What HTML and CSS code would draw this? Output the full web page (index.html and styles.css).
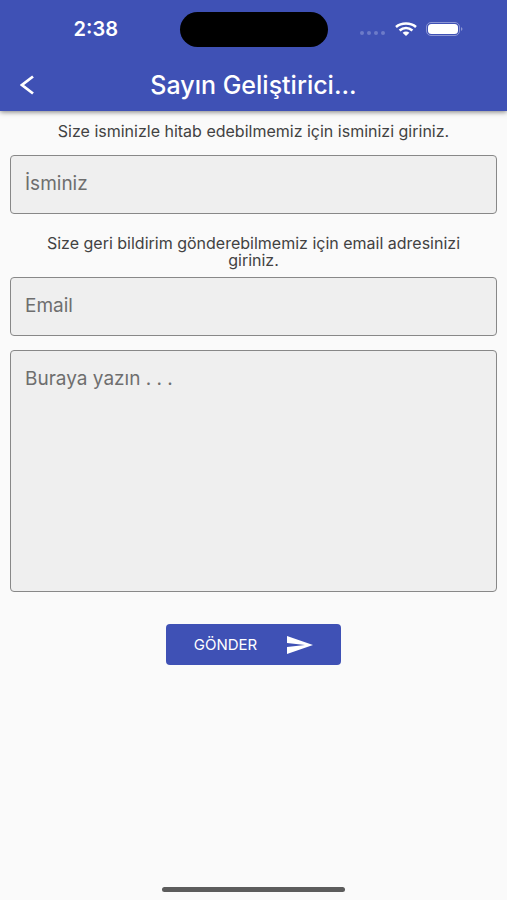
FILE: index.html
```html
<!DOCTYPE html>
<html lang="tr">
<head>
    <meta charset="UTF-8">
    <meta name="viewport" content="width=device-width, initial-scale=1.0">
    <title>Sayın Geliştirici...</title>
    <link rel="stylesheet" href="styles.css">
</head>
<body>
    <header class="app-bar">
        <div class="status-bar">
            <span class="clock">2:38</span>
            <div class="island"></div>
            <div class="status-icons">
                <svg class="signal" width="26" height="4" viewBox="0 0 26 4" aria-hidden="true">
                    <circle cx="2" cy="2" r="2"/>
                    <circle cx="9" cy="2" r="2"/>
                    <circle cx="16" cy="2" r="2"/>
                    <circle cx="23" cy="2" r="2"/>
                </svg>
                <svg width="22" height="14" viewBox="0 0 22 14" fill="none" stroke="#fff" stroke-width="2.6" aria-hidden="true">
                    <path d="M1 5C6.500 0.400 15.500 0.400 21 5"/>
                    <path d="M4.600 8.500C8.400 5.300 13.600 5.300 17.400 8.500"/>
                    <path d="M7.600 10.800C9.600 9.200 12.400 9.200 14.400 10.800L11 14Z" fill="#fff" stroke="none"/>
                </svg>
                <svg width="37" height="14" viewBox="0 0 37 14" aria-hidden="true">
                    <rect x="0.500" y="0.500" width="33" height="13" rx="4.500" fill="none" stroke="#8c96d3"/>
                    <rect x="2" y="2" width="30" height="10" rx="3.500" fill="#fff"/>
                    <path d="M35 5C37 6 37 8 35 9Z" fill="#8c96d3"/>
                </svg>
            </div>
        </div>
        <div class="toolbar">
            <button type="button" class="back" aria-label="Geri">
                <svg width="14" height="20" viewBox="0 0 14 20" fill="none" stroke="#fff" stroke-width="2.800" aria-hidden="true">
                    <path d="M13 1.500L2 10L13 18.500"/>
                </svg>
            </button>
            <h1>Sayın Geliştirici...</h1>
        </div>
    </header>

    <form class="feedback">
        <label for="name">Size isminizle hitab edebilmemiz için isminizi giriniz.</label>
        <input type="text" id="name" name="name" placeholder="İsminiz">

        <label for="email">Size geri bildirim gönderebilmemiz için email adresinizi giriniz.</label>
        <input type="email" id="email" name="email" placeholder="Email">

        <textarea id="message" name="message" placeholder="Buraya yazın . . ." aria-label="Buraya yazın"></textarea>

        <button type="submit" class="send">
            GÖNDER
            <svg width="26" height="18" viewBox="0 0 26 18" fill="#fff" aria-hidden="true">
                <path d="M0 0L26 9L0 18V11L18 9L0 7Z"/>
            </svg>
        </button>
    </form>

    <div class="home-bar"></div>
</body>
</html>
```

FILE: styles.css
```css
* {
    box-sizing: border-box;
}
body {
    margin: 0;
    min-height: 100vh;
    display: flex;
    flex-direction: column;
    background-color: #fafafa;
    color: #424242;
    font-family: Inter, "Liberation Sans", sans-serif;
}

/* Üst bar */
.app-bar {
    background-color: #3f51b5;
    color: white;
    box-shadow: 0 1px 5px rgba(0, 0, 0, 0.5);
}
.status-bar {
    display: grid;
    grid-template-columns: 1fr 148px 1fr;
    align-items: center;
    height: 58px;
}
.clock {
    padding-left: 12px;
    text-align: center;
    font-size: 20px;
    font-weight: 600;
}
.island {
    height: 35px;
    border-radius: 18px;
    background-color: black;
}
.status-icons {
    display: flex;
    align-items: center;
    justify-content: flex-end;
    gap: 9px;
    padding-right: 44px;
}
.signal {
    margin-top: 8px;
    fill: #6d7bc8;
}
.toolbar {
    display: grid;
    grid-template-columns: 54px 1fr 54px;
    align-items: center;
    height: 53px;
}
.back {
    display: flex;
    padding: 10px 20px;
    background: none;
    border: none;
    cursor: pointer;
}
h1 {
    margin: 0;
    text-align: center;
    font-size: 25px;
    line-height: 28px;
    font-weight: 500;
}

/* Form */
.feedback {
    display: flex;
    flex-direction: column;
    padding: 12px 10px;
}
label {
    padding: 0 24px;
    margin-bottom: 8px;
    text-align: center;
    font-size: 16px;
    line-height: 17px;
}
label[for="name"] {
    margin-bottom: 15px;
}
input, textarea {
    padding: 0 14px 2px;
    border: 1px solid #888;
    border-radius: 4px;
    background-color: #efefef;
    color: #424242;
    font-family: inherit;
    font-size: 19px;
}
input {
    height: 59px;
    margin-bottom: 21px;
}
input[type="email"] {
    margin-bottom: 14px;
}
textarea {
    height: 242px;
    padding-top: 16px;
    line-height: 24px;
    resize: none;
}
input::placeholder, textarea::placeholder {
    color: #6e6e6e;
}
.send {
    display: flex;
    align-items: center;
    align-self: center;
    gap: 30px;
    height: 41px;
    margin-top: 32px;
    padding: 0 28px;
    border: none;
    border-radius: 4px;
    background-color: #3f51b5;
    color: white;
    font-family: inherit;
    font-size: 15px;
    cursor: pointer;
}
.home-bar {
    width: 36%;
    height: 5px;
    margin: auto auto 8px;
    border-radius: 3px;
    background-color: #5c5c5c;
}
```
